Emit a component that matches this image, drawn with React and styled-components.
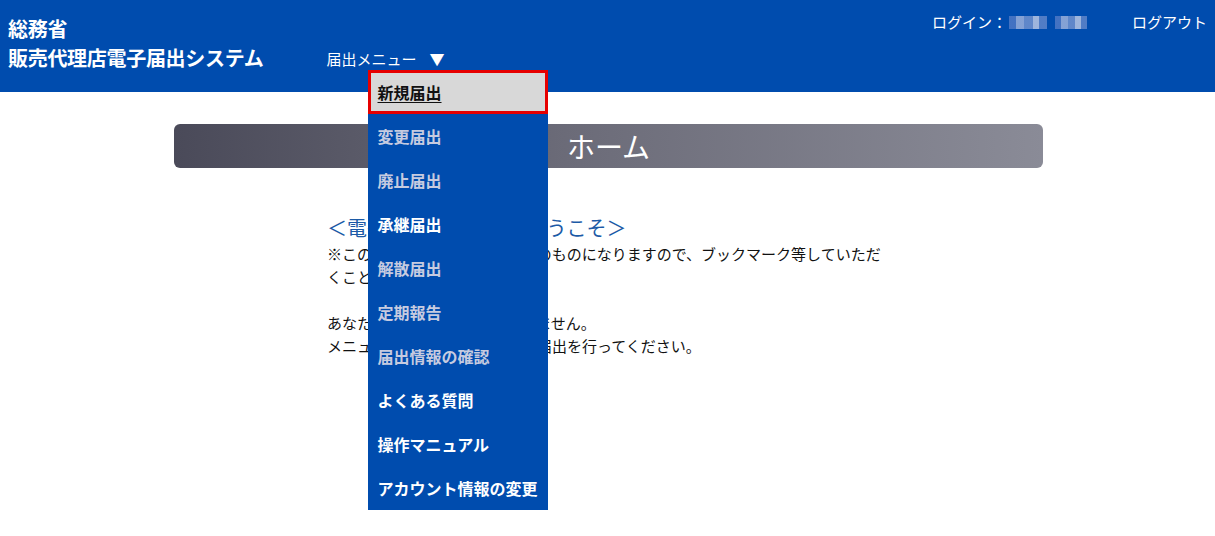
import React from "react";
import styled, { createGlobalStyle } from "styled-components";

const GlobalStyle = createGlobalStyle`
  html, body { margin: 0; padding: 0; background: #ffffff; }
  body {
    font-family: "Noto Sans CJK JP", "Noto Sans", sans-serif;
    color: #111;
  }
  * { box-sizing: border-box; }
`;

const BLUE = "#004cae";

const Page = styled.div`
  min-height: 536px;
  position: relative;
`;

const Header = styled.header`
  position: relative;
  z-index: 5;
  height: 92px;
  background: ${BLUE};
  display: flex;
  align-items: flex-start;
  color: #fff;
`;

const Brand = styled.div`
  padding: 14px 0 0 8px;
  display: flex;
  flex-direction: column;
  font-size: 20px;
  line-height: 29px;
  font-weight: 700;
  letter-spacing: -0.3px;
`;

const Nav = styled.div`
  position: relative;
  margin: 48px 0 0 63px;
  font-size: 15px;
  line-height: 22px;
  display: flex;
  align-items: center;
`;

const Caret = styled.span`
  margin-left: 13px;
  font-size: 15px;
`;

const Dropdown = styled.ul`
  position: absolute;
  left: 41px;
  top: 22px;
  z-index: 10;
  width: 180px;
  margin: 0;
  padding: 0;
  list-style: none;
  background: ${BLUE};
`;

const Item = styled.li`
  height: 44px;
  display: flex;
  align-items: center;
  padding-left: ${(p) => (p.$active ? "7px" : "10px")};
  font-size: 16px;
  font-weight: 700;
  white-space: nowrap;
  color: ${(p) => (p.$active ? "#111" : p.$muted ? "#c6cbe0" : "#ffffff")};
  background: ${(p) => (p.$active ? "#d8d8d8" : "transparent")};
  border: ${(p) => (p.$active ? "3px solid #e60000" : "none")};
  text-decoration: ${(p) => (p.$active ? "underline" : "none")};
  text-underline-offset: 3px;
`;

const Account = styled.div`
  margin-left: auto;
  padding: 11px 8px 0 0;
  display: flex;
  align-items: center;
  font-size: 15px;
  line-height: 22px;
`;

const Mosaic = styled.span`
  display: inline-block;
  width: ${(p) => p.$w}px;
  height: 13px;
  margin-left: ${(p) => p.$ml}px;
  background: linear-gradient(
    90deg,
    #4a76c4 0 18%,
    #93abd9 18% 40%,
    #6a8ecd 40% 62%,
    #afc1e2 62% 80%,
    #5a82c8 80% 100%
  );
  opacity: 0.9;
`;

const Logout = styled.span`
  margin-left: 45px;
`;

const Main = styled.main`
  padding-top: 32px;
`;

const TitleBar = styled.div`
  width: 869px;
  height: 44px;
  margin: 0 auto 0 174px;
  border-radius: 6px;
  background: linear-gradient(90deg, #4a4a59 0%, #6b6b78 45%, #8a8b97 100%);
  display: flex;
  align-items: center;
  justify-content: center;
  color: #fff;
  font-size: 28px;
  line-height: 44px;
`;

const Content = styled.section`
  width: 560px;
  margin: 46px 0 0 327px;
`;

const Welcome = styled.h2`
  margin: 0;
  font-size: 20px;
  line-height: 28px;
  font-weight: 400;
  color: #1c5aa6;
`;

const Para = styled.p`
  margin: 0 0 ${(p) => p.$mb || 0}px;
  font-size: 15px;
  line-height: 23px;
  color: #111;
`;

const items = [
  { label: "新規届出", active: true },
  { label: "変更届出", muted: true },
  { label: "廃止届出", muted: true },
  { label: "承継届出" },
  { label: "解散届出", muted: true },
  { label: "定期報告", muted: true },
  { label: "届出情報の確認", muted: true },
  { label: "よくある質問" },
  { label: "操作マニュアル" },
  { label: "アカウント情報の変更" },
];

export default function App() {
  return (
    <Page>
      <GlobalStyle />
      <Header>
        <Brand>
          <span>総務省</span>
          <span>販売代理店電子届出システム</span>
        </Brand>
        <Nav>
          届出メニュー<Caret>▼</Caret>
          <Dropdown>
            {items.map((it) => (
              <Item key={it.label} $active={it.active} $muted={it.muted}>
                {it.label}
              </Item>
            ))}
          </Dropdown>
        </Nav>
        <Account>
          <span>ログイン：</span>
          <Mosaic $w={38} $ml={2} />
          <Mosaic $w={32} $ml={8} />
          <Logout>ログアウト</Logout>
        </Account>
      </Header>
      <Main>
        <TitleBar>ホーム</TitleBar>
        <Content>
          <Welcome>＜電子届出システムへようこそ＞</Welcome>
          <Para $mb={23}>
            ※このページはログイン後専用のものになりますので、ブックマーク等していただくことをお勧めします。
          </Para>
          <Para>あなたは現在、届出を行っていません。</Para>
          <Para>メニューの新規届出を選択し、届出を行ってください。</Para>
        </Content>
      </Main>
    </Page>
  );
}
